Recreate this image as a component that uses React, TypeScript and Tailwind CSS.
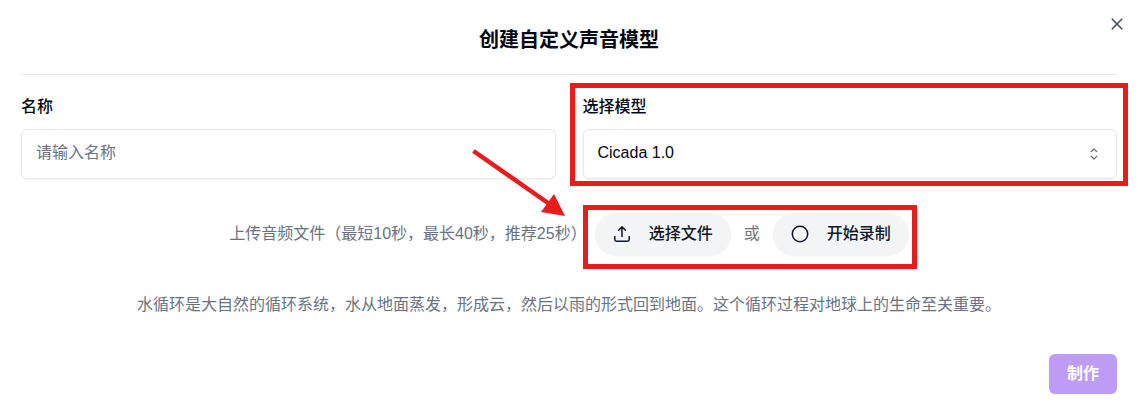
import { useState } from "react";

function CloseIcon() {
  return (
    <svg viewBox="0 0 18 18" className="size-[18px]" fill="none" stroke="currentColor" strokeWidth="1.4" aria-hidden="true">
      <path d="M3.8 3.8l10.4 10.4M14.2 3.8L3.8 14.2" />
    </svg>
  );
}

function SortIcon() {
  return (
    <svg viewBox="0 0 18 18" className="size-[18px]" fill="none" stroke="currentColor" strokeWidth="1.2" strokeLinecap="round" strokeLinejoin="round" aria-hidden="true">
      <path d="M6.2 6.7L9 4l2.8 2.7M6.2 11.3L9 14l2.8-2.7" />
    </svg>
  );
}

function UploadIcon() {
  return (
    <svg viewBox="0 0 18 18" className="size-[18px]" fill="none" stroke="currentColor" strokeWidth="1.5" strokeLinecap="round" strokeLinejoin="round" aria-hidden="true">
      <path d="M9 11.5V2M5.6 5.2L9 1.8l3.4 3.4" />
      <path d="M1.8 11.5v3c0 1 .8 1.7 1.7 1.7h11c1 0 1.7-.7 1.7-1.7v-3" />
    </svg>
  );
}

function RecordIcon() {
  return (
    <svg viewBox="0 0 18 18" className="size-[18px]" fill="none" stroke="currentColor" strokeWidth="1.5" aria-hidden="true">
      <circle cx="9" cy="9" r="7.7" />
    </svg>
  );
}

function PillButton({ icon, children }: { icon: React.ReactNode; children: React.ReactNode }) {
  return (
    <button
      type="button"
      className="flex h-[42px] items-center gap-[18px] rounded-full bg-gray-100 px-[18px] font-medium text-gray-900 shadow-xs hover:bg-gray-200"
    >
      {icon}
      {children}
    </button>
  );
}

export default function App() {
  const [name, setName] = useState("");
  const [model, setModel] = useState("cicada-1.0");

  return (
    <main className="relative bg-white px-[21px] pb-[21px] font-['Liberation_Sans','Noto_Sans_CJK_SC',sans-serif] text-base leading-6 text-gray-950">
      <button type="button" aria-label="关闭" className="absolute top-[15px] right-3 text-gray-700 hover:text-gray-950">
        <CloseIcon />
      </button>

      <h1 className="border-b border-gray-200 pt-[26px] pb-5 text-center text-xl leading-7 font-bold">
        创建自定义声音模型
      </h1>

      <form onSubmit={(e) => e.preventDefault()}>
        <div className="grid grid-cols-2 gap-[27px] pt-5">
          <div className="flex flex-col gap-[10px]">
            <label htmlFor="name" className="font-medium">
              名称
            </label>
            <input
              id="name"
              value={name}
              onChange={(e) => setName(e.target.value)}
              placeholder="请输入名称"
              className="h-[50px] w-full rounded-md border border-gray-200 px-[14px] pb-0.5 shadow-xs placeholder:text-gray-500"
            />
          </div>

          <div className="relative flex flex-col gap-[10px]">
            <label htmlFor="model" className="font-medium">
              选择模型
            </label>
            <div className="grid items-center">
              <select
                id="model"
                value={model}
                onChange={(e) => setModel(e.target.value)}
                className="col-start-1 row-start-1 h-[50px] w-full appearance-none rounded-md border border-gray-200 bg-white px-[14px] pb-0.5 shadow-xs"
              >
                <option value="cicada-1.0">Cicada 1.0</option>
              </select>
              <span className="pointer-events-none col-start-1 row-start-1 mr-[14px] justify-self-end text-gray-500">
                <SortIcon />
              </span>
            </div>
            <div className="pointer-events-none absolute -top-3 -right-[11px] -bottom-[7px] -left-[13px] border-5 border-[#e81c1c]" />
          </div>
        </div>

        <div className="flex items-center justify-center gap-2 pt-[34px]">
          <span className="text-gray-500">上传音频文件（最短10秒，最长40秒，推荐25秒）</span>
          <div className="relative flex items-center gap-[13px]">
            <PillButton icon={<UploadIcon />}>选择文件</PillButton>
            <span className="text-gray-500">或</span>
            <PillButton icon={<RecordIcon />}>开始录制</PillButton>
            <div className="pointer-events-none absolute -top-2 -right-2 -bottom-[14px] -left-3 border-5 border-[#e81c1c]" />
            <svg
              viewBox="0 0 94 68"
              className="pointer-events-none absolute right-full bottom-full mr-[29px] -mb-1 h-[68px] w-[94px]"
              aria-hidden="true"
            >
              <path d="M1.5 2L76 54" stroke="#e81c1c" strokeWidth="4.5" />
              <path d="M82 45L93 67L69 63Z" fill="#e81c1c" />
            </svg>
          </div>
        </div>

        <p className="pt-[38px] text-center text-gray-500">
          水循环是大自然的循环系统，水从地面蒸发，形成云，然后以雨的形式回到地面。这个循环过程对地球上的生命至关重要。
        </p>

        <div className="flex justify-end pt-[37px]">
          <button
            type="submit"
            disabled={!name}
            className="h-10 rounded-md bg-violet-600 px-[18px] font-bold text-white shadow-xs disabled:bg-[#bd9cf6]"
          >
            制作
          </button>
        </div>
      </form>
    </main>
  );
}
